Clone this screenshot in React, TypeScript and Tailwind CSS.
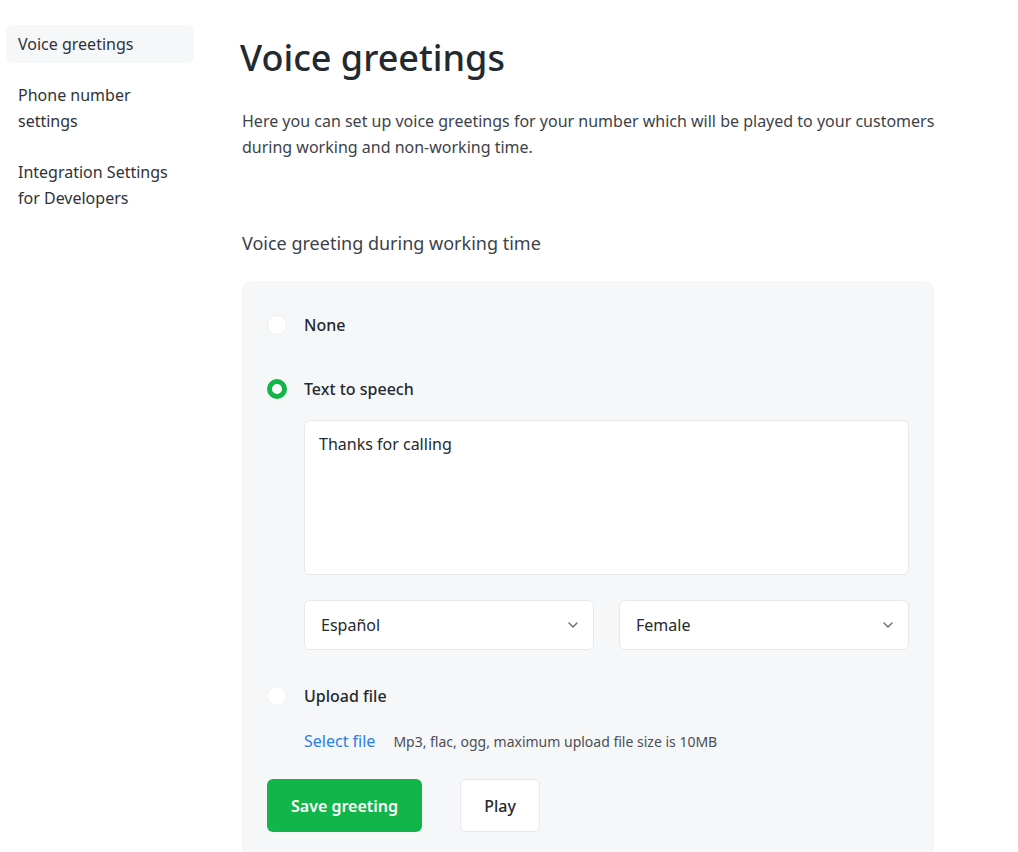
import React, { useState } from 'react';
import { ChevronDown } from 'lucide-react';

const navItems = [
  { id: 'voice', label: 'Voice greetings' },
  { id: 'phone', label: 'Phone number settings' },
  { id: 'integration', label: 'Integration Settings for Developers' },
];

type Mode = 'none' | 'tts' | 'upload';

const Radio = ({ checked, onClick }: { checked: boolean; onClick: () => void }) => (
  <button
    onClick={onClick}
    className={
      checked
        ? 'w-5 h-5 rounded-full border-[5px] border-[#12b54a] bg-white shrink-0'
        : 'w-5 h-5 rounded-full border border-[#eceef1] bg-white shrink-0'
    }
  />
);

const Select = ({ value }: { value: string }) => (
  <div className="flex-1 h-[50px] bg-white border border-[#e6e8eb] rounded-md flex items-center justify-between pl-4 pr-3 text-[16px] text-[#24292f]">
    <span>{value}</span>
    <ChevronDown size={16} strokeWidth={2.25} className="text-[#6b7280]" />
  </div>
);

export default function App() {
  const [active, setActive] = useState('voice');
  const [mode, setMode] = useState<Mode>('tts');

  return (
    <div className="min-h-screen bg-white flex font-['Noto_Sans',sans-serif] text-[#24292f]">
      <aside className="w-[200px] shrink-0 pl-[6px] pr-[6px] pt-[25px] flex flex-col gap-[13px]">
        {navItems.map((item) => (
          <a
            key={item.id}
            href="#"
            onClick={(e) => { e.preventDefault(); setActive(item.id); }}
            className={
              active === item.id
                ? 'block px-3 py-[6px] rounded-lg bg-[#f6f7f9] text-[16px] leading-[26px] text-[#2f3337]'
                : 'block px-3 py-[6px] rounded-lg text-[16px] leading-[26px] text-[#2f3337]'
            }
          >
            {item.label}
          </a>
        ))}
      </aside>

      <main className="flex-1 pl-[40px] pt-[32px] pr-[50px]">
        <h1 className="text-[36px] leading-[52px] font-medium text-[#24292f]">Voice greetings</h1>
        <p className="mt-[24px] pl-[2px] text-[16px] leading-[26px] text-[#3d4249]">
          Here you can set up voice greetings for your number which will be played to your customers during working and non-working time.
        </p>

        <h2 className="mt-[70px] pl-[2px] text-[18px] leading-[26px] text-[#3d4249]">Voice greeting during working time</h2>

        <section className="mt-[25px] ml-[2px] w-[692px] bg-[#f6f7f9] rounded-lg px-[25px] pt-[32px] pb-[40px]">
          <label className="flex items-center gap-[17px] h-[24px] cursor-pointer">
            <Radio checked={mode === 'none'} onClick={() => setMode('none')} />
            <span className="text-[16px] font-medium text-[#24292f]">None</span>
          </label>

          <label className="mt-[40px] flex items-center gap-[17px] h-[24px] cursor-pointer">
            <Radio checked={mode === 'tts'} onClick={() => setMode('tts')} />
            <span className="text-[16px] font-medium text-[#24292f]">Text to speech</span>
          </label>

          <div className="pl-[37px] mt-[19px]">
            <textarea
              defaultValue="Thanks for calling"
              className="block w-full h-[155px] resize-none bg-white border border-[#e6e8eb] rounded-md px-[14px] py-[10px] text-[16px] leading-[26px] text-[#24292f] outline-none"
            />
            <div className="mt-[25px] flex gap-[25px]">
              <Select value="Español" />
              <Select value="Female" />
            </div>
          </div>

          <label className="mt-[34px] flex items-center gap-[17px] h-[24px] cursor-pointer">
            <Radio checked={mode === 'upload'} onClick={() => setMode('upload')} />
            <span className="text-[16px] font-medium text-[#24292f]">Upload file</span>
          </label>

          <div className="pl-[37px] mt-[21px] flex items-center gap-[18px] h-[24px]">
            <a href="#" onClick={(e) => e.preventDefault()} className="text-[16px] text-[#2b7de9]">Select file</a>
            <span className="text-[14px] text-[#4a4f55]">Mp3, flac, ogg, maximum upload file size is 10MB</span>
          </div>

          <div className="mt-[26px] flex gap-[38px]">
            <button className="h-[53px] w-[155px] rounded-md bg-[#12b54a] text-white text-[16px] font-semibold">Save greeting</button>
            <button className="h-[53px] w-[80px] rounded-md bg-white border border-[#e6e8eb] text-[16px] font-medium text-[#24292f]">Play</button>
          </div>
        </section>
      </main>
    </div>
  );
}
